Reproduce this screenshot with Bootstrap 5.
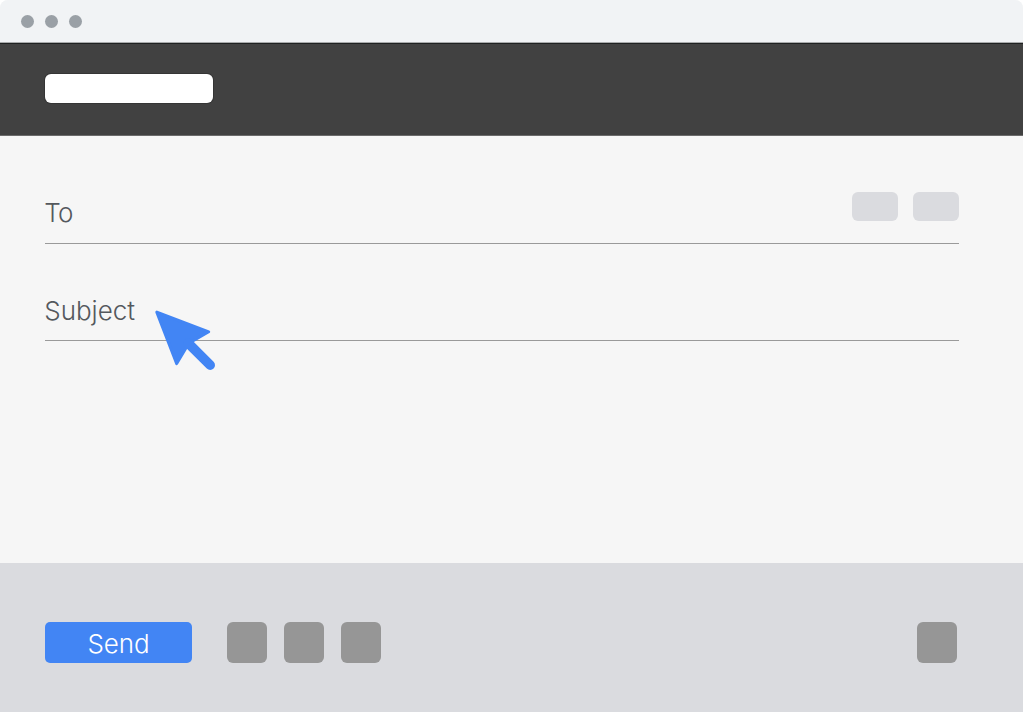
<!DOCTYPE html>
<html lang="en">
<head>
    <meta charset="UTF-8">
    <meta name="viewport" content="width=device-width, initial-scale=1">
    <title>Compose</title>
    <link href="https://cdn.jsdelivr.net/npm/bootstrap@5.3.0/dist/css/bootstrap.min.css" rel="stylesheet">
    <style>
        body {
            background: #fff;
            font-family: Inter, Lato, sans-serif;
        }
        .mail-window {
            width: 1023px;
            height: 712px;
            border-radius: 8px 8px 0 0;
            background: #f6f6f6;
        }
        .title-bar {
            height: 43px;
            padding-left: 21.4px;
            gap: 10.6px;
            background: #f1f3f5;
            border-bottom: 1px solid #a9abac;
        }
        .dot {
            width: 13px;
            height: 13px;
            background: #9aa0a6;
        }
        .mail-header {
            height: 93px;
            padding: 29.5px 45px 0;
            background: #414141;
            border-top: 1px solid #1f2121;
            border-bottom: 1px solid #6b6b6b;
        }
        .header-box {
            width: 168px;
            height: 29.5px;
            border-radius: 6px;
            background: #fff;
            box-shadow: 0 0 0 1px #353535;
        }
        .mail-body {
            padding: 0 64px 0 45px;
        }
        .field {
            color: #54585d;
            font-size: 26px;
            font-weight: 350;
            line-height: 32px;
            border-bottom: 1.5px solid #9a9a9a;
        }
        .field label {
            margin-left: -.8px;
        }
        .field-to {
            height: 108px;
            padding-top: 56px;
            letter-spacing: -.6px;
        }
        .field-subject {
            height: 97px;
            padding-top: 51px;
        }
        .field-to label {
            padding-top: 5px;
        }
        .chip {
            width: 46px;
            height: 29px;
            border-radius: 6px;
            background: #dadbdf;
        }
        .chips {
            gap: 15px;
        }
        .pointer {
            position: absolute;
            left: 150px;
            top: 305px;
        }
        .mail-footer {
            height: 149px;
            padding: 59.4px 66.5px 0 45px;
            background: #dadbdf;
        }
        .btn-send {
            width: 147px;
            height: 41px;
            border-radius: 5px;
            background: #4285f4;
            color: #fff;
            font-size: 26px;
            font-weight: 350;
            letter-spacing: -.1px;
            line-height: 41px;
        }
        .btn-send span {
            display: block;
            padding-top: 1px;
        }
        .tools {
            gap: 17px;
            margin-left: 35px;
        }
        .tool {
            width: 40px;
            height: 41px;
            border-radius: 6px;
            background: #969696;
        }
    </style>
</head>
<body class="overflow-hidden">

<div class="mail-window d-flex flex-column position-relative overflow-hidden">

    <!-- Title bar -->
    <div class="title-bar d-flex align-items-center flex-shrink-0">
        <span class="dot rounded-circle"></span>
        <span class="dot rounded-circle"></span>
        <span class="dot rounded-circle"></span>
    </div>

    <!-- Header -->
    <header class="mail-header flex-shrink-0">
        <div class="header-box"></div>
    </header>

    <!-- Fields -->
    <main class="mail-body flex-grow-1">
        <div class="field field-to d-flex justify-content-between align-items-start">
            <label>To</label>
            <div class="chips d-flex">
                <span class="chip"></span>
                <span class="chip"></span>
            </div>
        </div>
        <div class="field field-subject d-flex align-items-start">
            <label>Subject</label>
        </div>
    </main>

    <!-- Actions -->
    <footer class="mail-footer d-flex align-items-start flex-shrink-0">
        <button type="button" class="btn btn-send border-0 p-0"><span>Send</span></button>
        <div class="tools d-flex">
            <span class="tool"></span>
            <span class="tool"></span>
            <span class="tool"></span>
        </div>
        <span class="tool ms-auto"></span>
    </footer>

    <!-- Mouse pointer -->
    <svg class="pointer" width="70" height="70" viewBox="0 0 70 70" fill="#4285f4" stroke="#4285f4" stroke-linejoin="round" stroke-linecap="round">
        <path d="M6.8 7.1 L58.7 26.8 L42.3 36.2 L36.7 41.7 L26.7 58.6 Z" stroke-width="3"/>
        <path d="M38 38 L60.2 60.2" stroke-width="9.6"/>
    </svg>
</div>

<script src="https://cdn.jsdelivr.net/npm/bootstrap@5.3.0/dist/js/bootstrap.bundle.min.js"></script>
</body>
</html>
